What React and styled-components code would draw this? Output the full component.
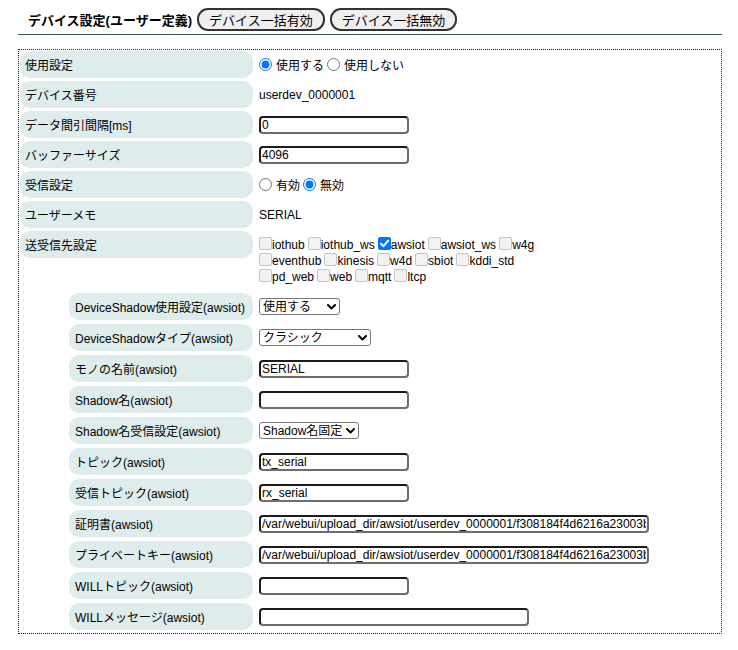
import React from "react";
import styled, { createGlobalStyle } from "styled-components";

const Global = createGlobalStyle`
  html, body { margin: 0; padding: 0; background: #fff; }
  body {
    font-family: "Liberation Sans", Arial, "Noto Sans CJK JP", sans-serif;
    font-size: 12px;
    color: #000;
  }
`;

const Page = styled.div`
  width: 704px;
  margin-left: 18px;
`;

const Header = styled.div`
  display: flex;
  align-items: center;
  gap: 5px;
  padding: 8px 0 3px 10px;
  border-bottom: 1px solid #2f5d57;
`;

const Title = styled.h1`
  margin: 0;
  font-size: 13px;
  font-weight: bold;
  font-family: "Liberation Sans", Arial, "Noto Sans CJK JP", sans-serif;
`;

const PillButton = styled.button`
  height: 23px;
  padding: 0 10px;
  border: 2px solid #333;
  border-radius: 11px;
  background: #efefef;
  font-family: "Liberation Sans", Arial, "Noto Sans CJK JP", sans-serif;
  font-size: 13px;
  color: #000;
  box-sizing: border-box;
`;

const Box = styled.div`
  margin-top: 14px;
  border: 1px dotted #222;
  padding: 1px 3px 3px 1px;
`;

const Grid = styled.div`
  display: grid;
  grid-template-columns: ${(p) => p.$label}px 1fr;
  column-gap: 6px;
  row-gap: ${(p) => p.$gap}px;
  margin-left: ${(p) => p.$indent || 0}px;
  margin-top: ${(p) => p.$top || 0}px;
`;

const Label = styled.div`
  height: 27px;
  display: flex;
  align-items: center;
  padding-left: ${(p) => (p.$nested ? 6 : 5)}px;
  background: #deecec;
  border-radius: 10px;
  align-self: start;
  white-space: nowrap;
`;

const Value = styled.div`
  min-height: 27px;
  display: flex;
  align-items: center;
  gap: 3px;
`;

const CheckValue = styled.div`
  padding-top: 6px;
  display: flex;
  flex-direction: column;
`;

const FullRow = styled.div`
  grid-column: 1 / -1;
`;

const RadioLabel = styled.label`
  display: inline-flex;
  align-items: center;
  gap: 4px;
`;

const Radio = styled.input.attrs({ type: "radio" })`
  width: 13px;
  height: 13px;
  margin: 0;
  accent-color: #0075ff;
`;

const TextInput = styled.input.attrs({ type: "text" })`
  box-sizing: border-box;
  width: ${(p) => p.$w}px;
  height: 18px;
  padding: 0 1px;
  border: 2px solid;
  border-color: #1c1c1c #6e6e6e #6e6e6e #1c1c1c;
  border-radius: 4px;
  font-family: "Liberation Sans", Arial, "Noto Sans CJK JP", sans-serif;
  font-size: 12px;
  line-height: 14px;
  color: #000;
  background: #fff;
  outline: none;
`;

const SelectWrap = styled.span`
  position: relative;
  display: inline-flex;
  width: ${(p) => p.$w}px;
`;

const Select = styled.select`
  appearance: none;
  box-sizing: border-box;
  width: 100%;
  height: 17px;
  padding: 0 12px 0 3px;
  border: 1px solid #767676;
  border-radius: 3px;
  background: #fff;
  font-family: "Liberation Sans", Arial, "Noto Sans CJK JP", sans-serif;
  font-size: 12px;
  color: #000;
`;

const Chevron = styled.svg`
  position: absolute;
  right: 4px;
  top: 6px;
  pointer-events: none;
`;

function Dropdown({ w, value, options }) {
  return (
    <SelectWrap $w={w}>
      <Select defaultValue={value}>
        {options.map((o) => (
          <option key={o} value={o}>
            {o}
          </option>
        ))}
      </Select>
      <Chevron width="9" height="6" viewBox="0 0 9 6">
        <path d="M1 1 L4.5 4.5 L8 1" stroke="#000" strokeWidth="2" fill="none" strokeLinecap="round" strokeLinejoin="round" />
      </Chevron>
    </SelectWrap>
  );
}

const CheckLine = styled.div`
  display: flex;
  align-items: center;
  gap: 3px;
  height: 16px;
  white-space: nowrap;
`;

const CheckItem = styled.label`
  display: inline-flex;
  align-items: center;
`;

const CheckBox = styled.span`
  box-sizing: border-box;
  width: 13px;
  height: 13px;
  margin-bottom: 3px;
  border-radius: 2px;
  border: 1px solid ${(p) => (p.$on ? "#0075ff" : "#c4c4c4")};
  background: ${(p) => (p.$on ? "#0075ff" : "#f2f2f2")};
  display: inline-flex;
  align-items: center;
  justify-content: center;
`;

function Check({ on, children }) {
  return (
    <CheckItem>
      <CheckBox $on={on}>
        {on && (
          <svg width="11" height="11" viewBox="0 0 11 11">
            <path d="M2 5.8 L4.4 8.2 L9.2 2.6" stroke="#fff" strokeWidth="2" fill="none" strokeLinecap="round" strokeLinejoin="round" />
          </svg>
        )}
      </CheckBox>
      {children}
    </CheckItem>
  );
}

const lines = [
  [["iothub"], ["iothub_ws"], ["awsiot", true], ["awsiot_ws"], ["w4g"]],
  [["eventhub"], ["kinesis"], ["w4d"], ["sbiot"], ["kddi_std"]],
  [["pd_web"], ["web"], ["mqtt"], ["ltcp"]],
];

const longPath =
  "/var/webui/upload_dir/awsiot/userdev_0000001/f308184f4d6216a23003b5e1c9d2a7f0-certificate.pem.crt";
const longKey =
  "/var/webui/upload_dir/awsiot/userdev_0000001/f308184f4d6216a23003b5e1c9d2a7f0-private.pem.key";

export default function App() {
  return (
    <Page>
      <Global />
      <Header>
        <Title>デバイス設定(ユーザー定義)</Title>
        <PillButton>デバイス一括有効</PillButton>
        <PillButton>デバイス一括無効</PillButton>
      </Header>
      <Box>
        <Grid $label={233} $gap={3}>
          <Label>使用設定</Label>
          <Value>
            <RadioLabel>
              <Radio name="use" defaultChecked />
              使用する
            </RadioLabel>
            <RadioLabel>
              <Radio name="use" />
              使用しない
            </RadioLabel>
          </Value>

          <Label>デバイス番号</Label>
          <Value>userdev_0000001</Value>

          <Label>データ間引間隔[ms]</Label>
          <Value>
            <TextInput $w={150} defaultValue="0" />
          </Value>

          <Label>バッファーサイズ</Label>
          <Value>
            <TextInput $w={150} defaultValue="4096" />
          </Value>

          <Label>受信設定</Label>
          <Value>
            <RadioLabel>
              <Radio name="recv" />
              有効
            </RadioLabel>
            <RadioLabel>
              <Radio name="recv" defaultChecked />
              無効
            </RadioLabel>
          </Value>

          <Label>ユーザーメモ</Label>
          <Value>SERIAL</Value>

          <Label>送受信先設定</Label>
          <CheckValue>
            {lines.map((line, i) => (
              <CheckLine key={i}>
                {line.map(([name, on]) => (
                  <Check key={name} on={on}>
                    {name}
                  </Check>
                ))}
              </CheckLine>
            ))}
          </CheckValue>

          <FullRow>
            <Grid $label={184} $gap={4} $indent={49} $top={5}>
              <Label $nested>DeviceShadow使用設定(awsiot)</Label>
              <Value>
                <Dropdown w={81} value="使用する" options={["使用する", "使用しない"]} />
              </Value>

              <Label $nested>DeviceShadowタイプ(awsiot)</Label>
              <Value>
                <Dropdown w={112} value="クラシック" options={["クラシック", "名前付きシャドウ"]} />
              </Value>

              <Label $nested>モノの名前(awsiot)</Label>
              <Value>
                <TextInput $w={150} defaultValue="SERIAL" />
              </Value>

              <Label $nested>Shadow名(awsiot)</Label>
              <Value>
                <TextInput $w={150} defaultValue="" />
              </Value>

              <Label $nested>Shadow名受信設定(awsiot)</Label>
              <Value>
                <Dropdown w={100} value="Shadow名固定" options={["Shadow名固定", "トピック指定"]} />
              </Value>

              <Label $nested>トピック(awsiot)</Label>
              <Value>
                <TextInput $w={150} defaultValue="tx_serial" />
              </Value>

              <Label $nested>受信トピック(awsiot)</Label>
              <Value>
                <TextInput $w={150} defaultValue="rx_serial" />
              </Value>

              <Label $nested>証明書(awsiot)</Label>
              <Value>
                <TextInput $w={390} defaultValue={longPath} />
              </Value>

              <Label $nested>プライベートキー(awsiot)</Label>
              <Value>
                <TextInput $w={390} defaultValue={longKey} />
              </Value>

              <Label $nested>WILLトピック(awsiot)</Label>
              <Value>
                <TextInput $w={150} defaultValue="" />
              </Value>

              <Label $nested>WILLメッセージ(awsiot)</Label>
              <Value>
                <TextInput $w={270} defaultValue="" />
              </Value>
            </Grid>
          </FullRow>
        </Grid>
      </Box>
    </Page>
  );
}
